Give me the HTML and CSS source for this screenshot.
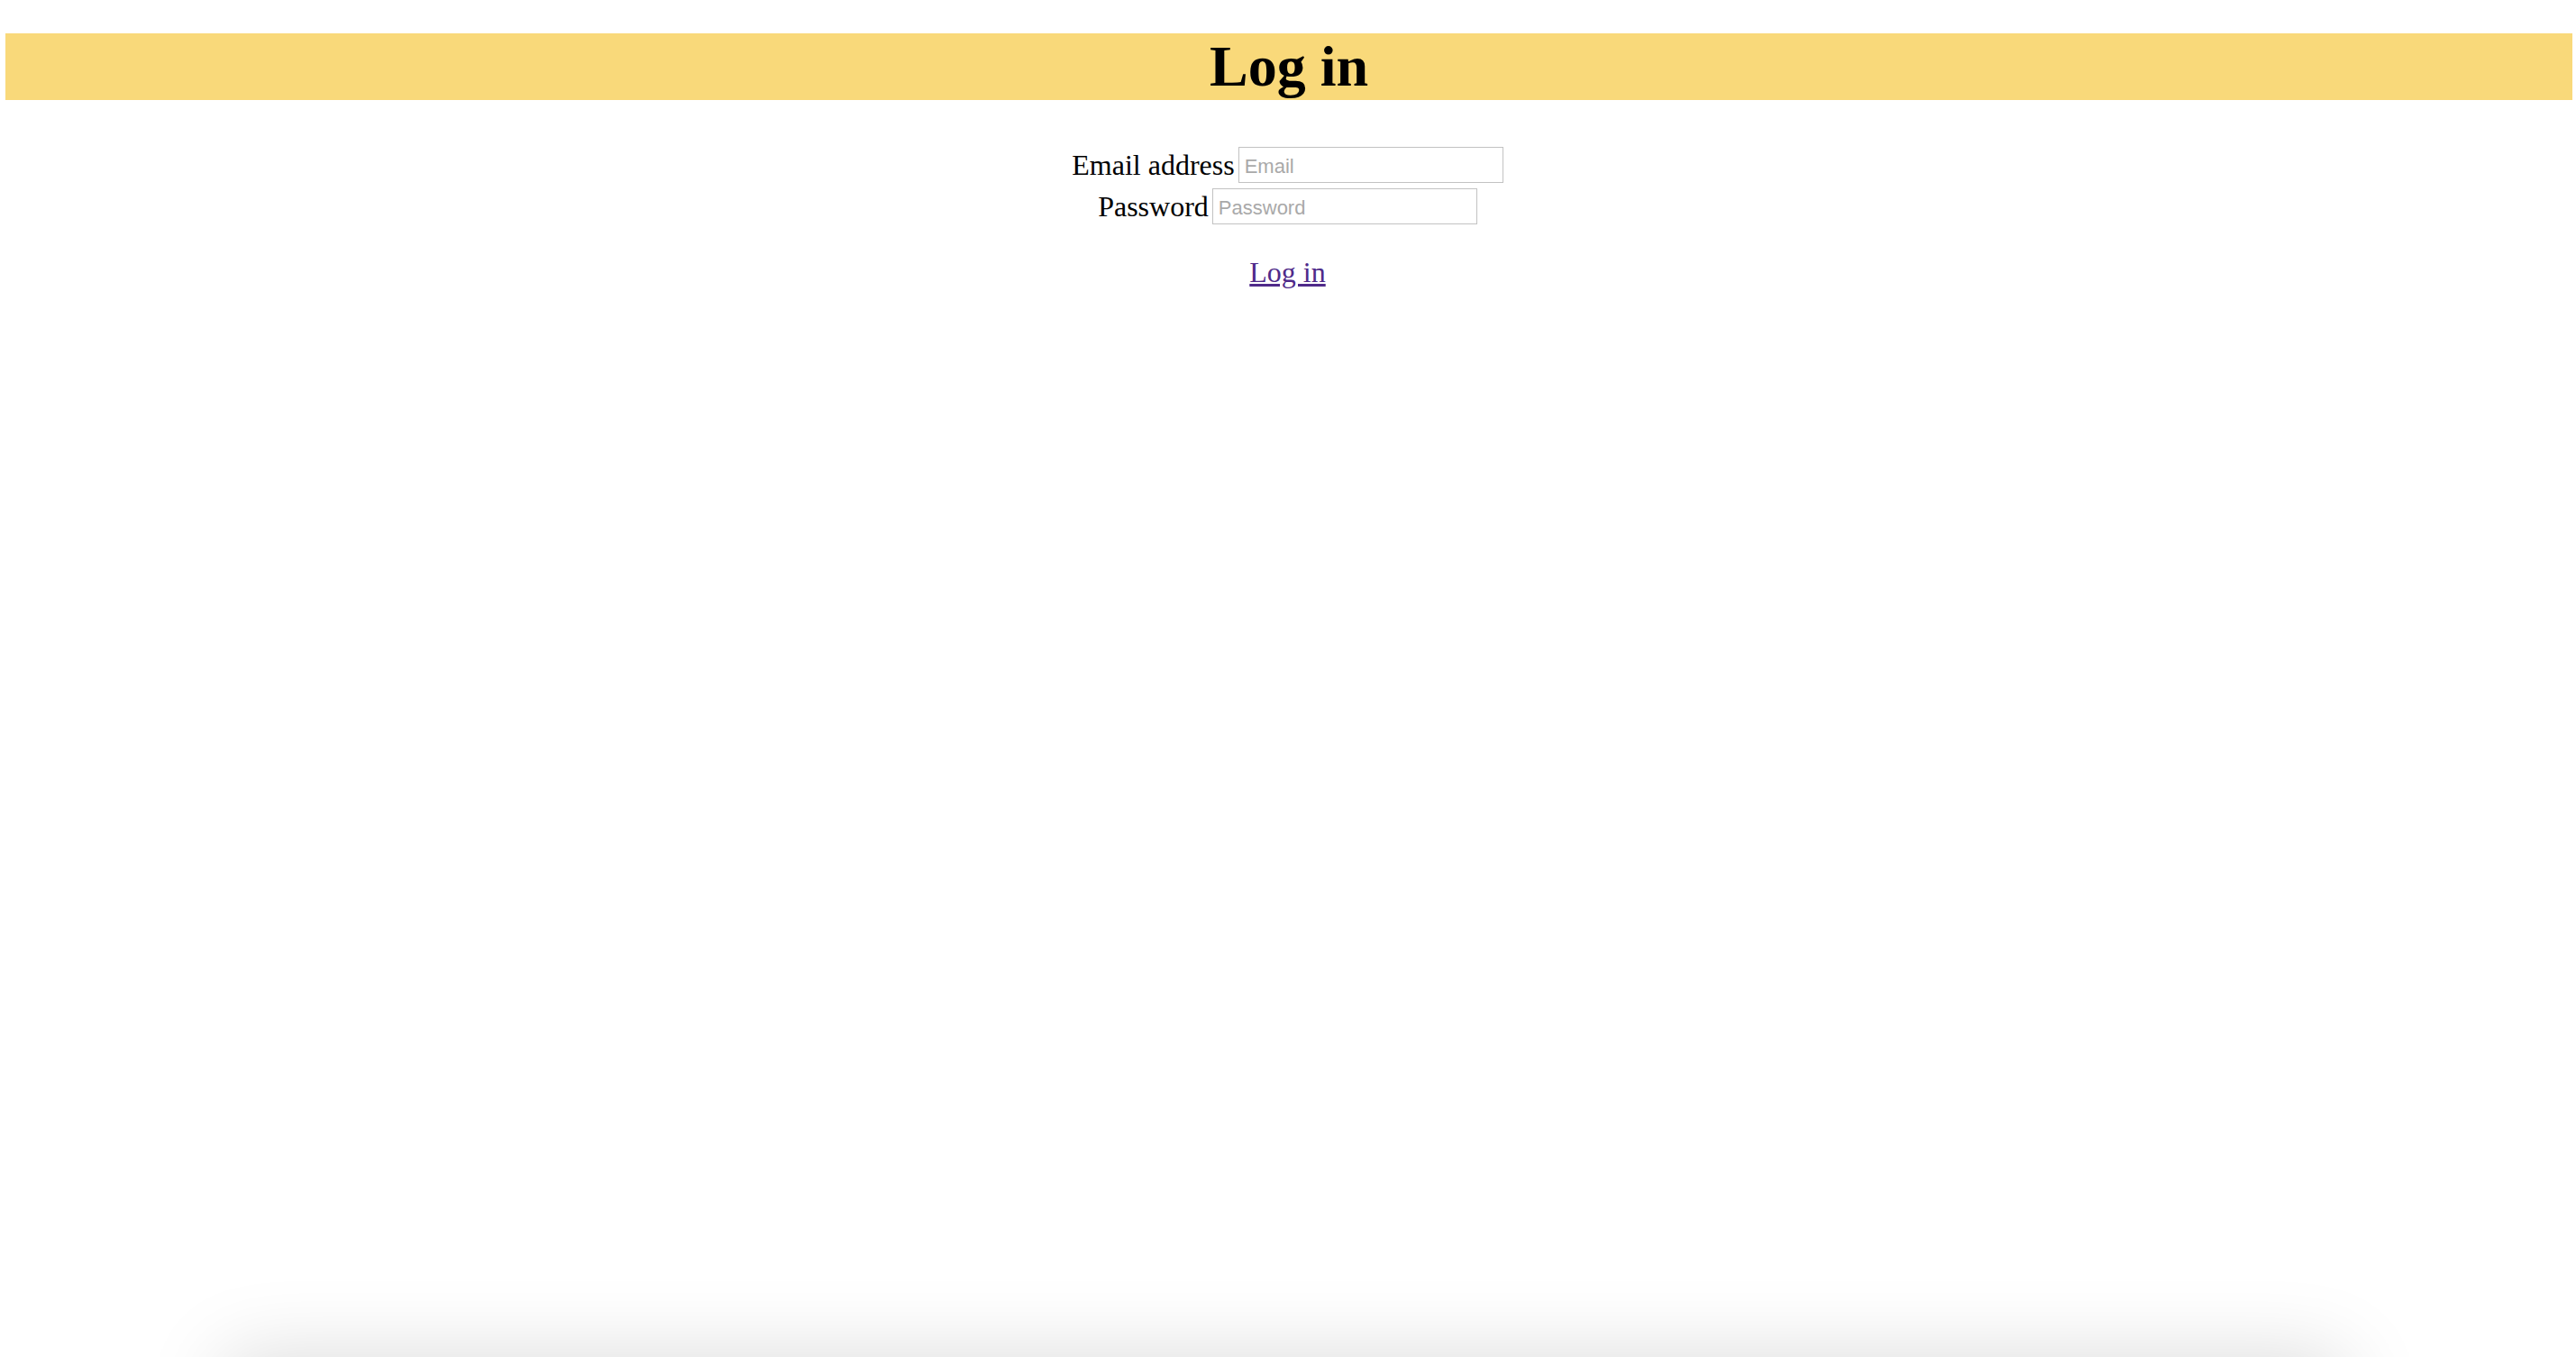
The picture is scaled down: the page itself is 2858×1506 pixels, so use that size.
FILE: index.html
```html
<!DOCTYPE html>
<html lang="en">
<head>
<meta charset="utf-8">
<title>Log in</title>
<link rel="stylesheet" href="styles.css">
</head>
<body>
<h1 class="page-title">Log in</h1>
<form class="login-form">
  <div class="field-row">
    <label class="field-label" for="email">Email address</label>
    <input class="field-input" id="email" type="email" placeholder="Email">
  </div>
  <div class="field-row">
    <label class="field-label" for="password">Password</label>
    <input class="field-input" id="password" type="password" placeholder="Password">
  </div>
  <div class="submit-row">
    <a class="submit-link" href="#">Log in</a>
  </div>
</form>
<div class="bottom-drawer"></div>
</body>
</html>
```

FILE: styles.css
```css
html, body {
  background: #ffffff;
}

body {
  margin: 0 4px 0 6px;
  font-family: "Liberation Serif", "Times New Roman", serif;
  font-size: 32px;
  color: #000000;
}

.page-title {
  margin: 37px 0 0;
  background: #f9d97a;
  font-size: 64px;
  font-weight: bold;
  line-height: 74px;
  text-align: center;
}

.login-form {
  margin-top: 52px;
  padding-right: 3px;
  display: flex;
  flex-direction: column;
  align-items: center;
  gap: 6px;
}

.field-row {
  display: flex;
  align-items: center;
  gap: 4px;
}

.field-label {
  font-size: 32px;
  line-height: 36px;
}

.field-input {
  box-sizing: border-box;
  width: 294px;
  height: 40px;
  margin: 0;
  padding: 3px 6px 0;
  border: 1.5px solid #c2c2c2;
  border-radius: 0;
  background: #ffffff;
  font-family: "Liberation Sans", Arial, sans-serif;
  font-size: 22px;
  color: #000000;
  outline: none;
}

.field-input::placeholder {
  color: #a9a9a9;
}

.submit-row {
  margin-top: 29px;
  line-height: 37px;
}

.submit-link {
  color: #4f2a8a;
  text-decoration: underline;
  font-size: 32px;
}

.bottom-drawer {
  position: fixed;
  left: 250px;
  right: 258px;
  bottom: -200px;
  height: 200px;
  background: #ffffff;
  box-shadow: 0 0 90px rgba(0, 0, 0, 0.15);
}
```
